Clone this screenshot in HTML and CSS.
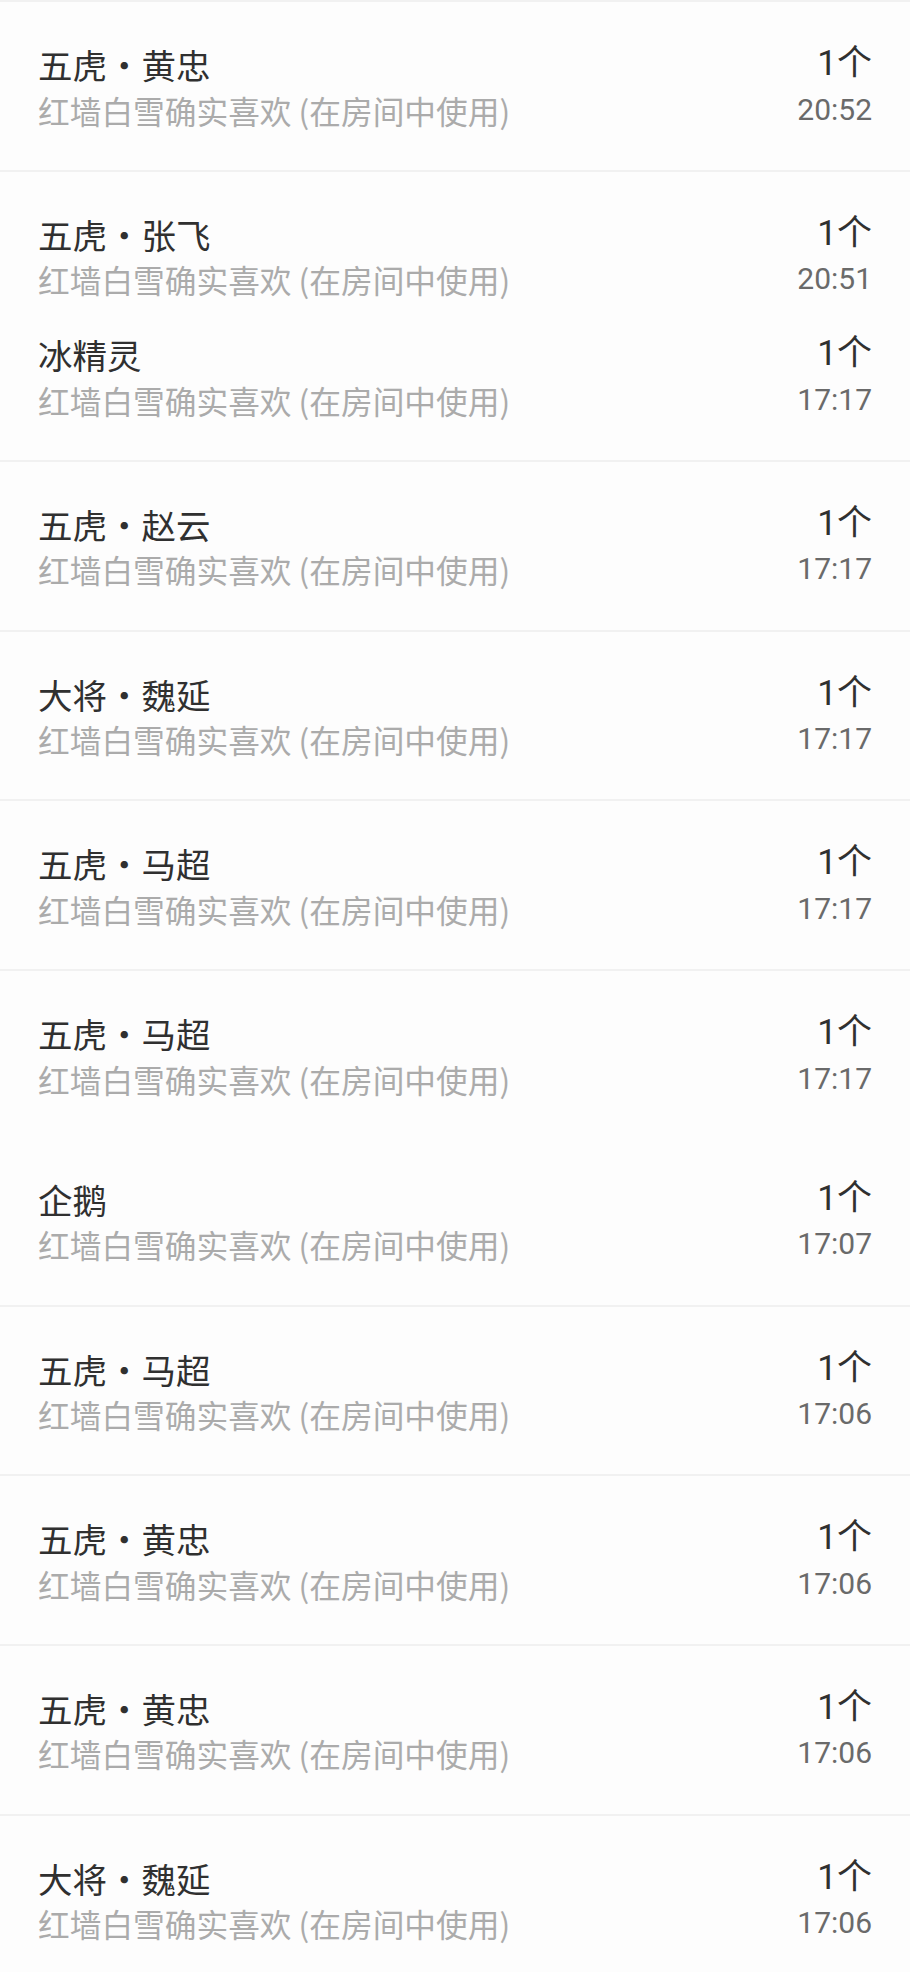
FILE: index.html
```html
<!DOCTYPE html>
<html lang="zh-CN">
<head>
    <meta charset="UTF-8">
    <title>使用记录</title>
    <link rel="stylesheet" href="styles.css">
</head>
<body>
<ul class="list">
    <li class="row">
        <div class="item">
            <div class="left"><span class="title">五虎·黄忠</span><span class="sub">红墙白雪确实喜欢 (在房间中使用)</span></div>
            <div class="right"><span class="count">1个</span><span class="time">20:52</span></div>
        </div>
    </li>
    <li class="row">
        <div class="item">
            <div class="left"><span class="title">五虎·张飞</span><span class="sub">红墙白雪确实喜欢 (在房间中使用)</span></div>
            <div class="right"><span class="count">1个</span><span class="time">20:51</span></div>
        </div>
        <div class="item">
            <div class="left"><span class="title">冰精灵</span><span class="sub">红墙白雪确实喜欢 (在房间中使用)</span></div>
            <div class="right"><span class="count">1个</span><span class="time">17:17</span></div>
        </div>
    </li>
    <li class="row">
        <div class="item">
            <div class="left"><span class="title">五虎·赵云</span><span class="sub">红墙白雪确实喜欢 (在房间中使用)</span></div>
            <div class="right"><span class="count">1个</span><span class="time">17:17</span></div>
        </div>
    </li>
    <li class="row">
        <div class="item">
            <div class="left"><span class="title">大将·魏延</span><span class="sub">红墙白雪确实喜欢 (在房间中使用)</span></div>
            <div class="right"><span class="count">1个</span><span class="time">17:17</span></div>
        </div>
    </li>
    <li class="row">
        <div class="item">
            <div class="left"><span class="title">五虎·马超</span><span class="sub">红墙白雪确实喜欢 (在房间中使用)</span></div>
            <div class="right"><span class="count">1个</span><span class="time">17:17</span></div>
        </div>
    </li>
    <li class="row loose">
        <div class="item">
            <div class="left"><span class="title">五虎·马超</span><span class="sub">红墙白雪确实喜欢 (在房间中使用)</span></div>
            <div class="right"><span class="count">1个</span><span class="time">17:17</span></div>
        </div>
        <div class="item">
            <div class="left"><span class="title">企鹅</span><span class="sub">红墙白雪确实喜欢 (在房间中使用)</span></div>
            <div class="right"><span class="count">1个</span><span class="time">17:07</span></div>
        </div>
    </li>
    <li class="row">
        <div class="item">
            <div class="left"><span class="title">五虎·马超</span><span class="sub">红墙白雪确实喜欢 (在房间中使用)</span></div>
            <div class="right"><span class="count">1个</span><span class="time">17:06</span></div>
        </div>
    </li>
    <li class="row">
        <div class="item">
            <div class="left"><span class="title">五虎·黄忠</span><span class="sub">红墙白雪确实喜欢 (在房间中使用)</span></div>
            <div class="right"><span class="count">1个</span><span class="time">17:06</span></div>
        </div>
    </li>
    <li class="row">
        <div class="item">
            <div class="left"><span class="title">五虎·黄忠</span><span class="sub">红墙白雪确实喜欢 (在房间中使用)</span></div>
            <div class="right"><span class="count">1个</span><span class="time">17:06</span></div>
        </div>
    </li>
    <li class="row">
        <div class="item">
            <div class="left"><span class="title">大将·魏延</span><span class="sub">红墙白雪确实喜欢 (在房间中使用)</span></div>
            <div class="right"><span class="count">1个</span><span class="time">17:06</span></div>
        </div>
    </li>
</ul>
</body>
</html>
```

FILE: styles.css
```css
body{
    margin: 0;
    background-color: #fdfdfd;
    font-family: "Noto Sans CJK SC", sans-serif;
}
.list{
    list-style: none;
    margin: 0;
    padding: 0;
}
.row{
    display: flex;
    flex-direction: column;
    gap: 33.1px;
    padding: 40px 38px 40.2px;
    border-top: 2px solid #f1f1f1;
}
.row.loose{
    gap: 78.4px;
}
.item{
    display: flex;
    justify-content: space-between;
    align-items: flex-start;
}
.left,
.right{
    display: flex;
    flex-direction: column;
}
.right{
    align-items: flex-end;
    font-family: Roboto, "Noto Sans CJK SC", sans-serif;
}
.title{
    font-size: 34.5px;
    line-height: 44px;
    color: #303030;
}
.sub{
    font-size: 31.7px;
    line-height: 40px;
    margin-top: 3.5px;
    color: #ababab;
}
.count{
    font-size: 35px;
    line-height: 44px;
    color: #303030;
}
.time{
    font-size: 30px;
    line-height: 40px;
    margin-top: 3.5px;
    color: #6a6a6a;
}
```
